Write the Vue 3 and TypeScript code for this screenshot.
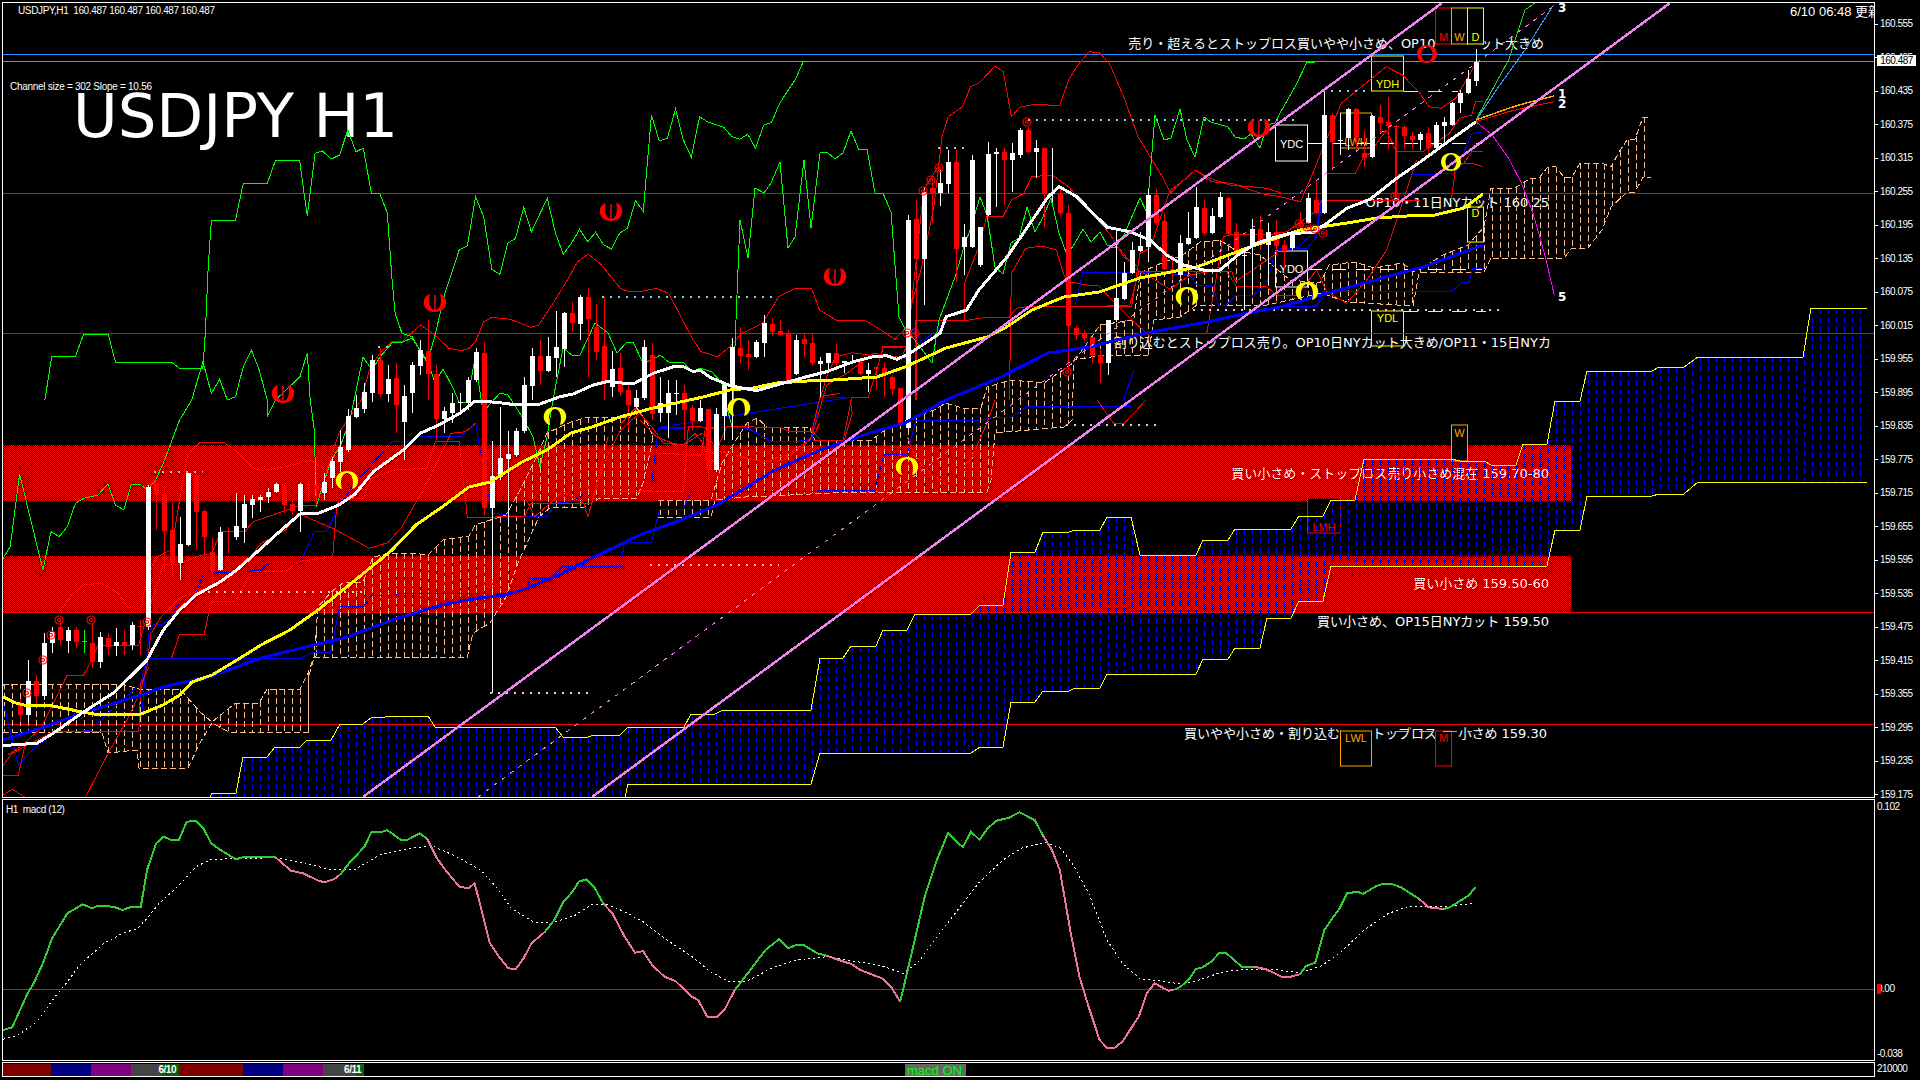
<script setup lang="ts">
type Pt = [number, number]

interface Line {
  color: string
  w: number
  pts: Pt[]
  dash?: string
}

// the reference crops were read at different scales, so points are kept per crop
const conv = (ox: number, oy: number, sx: number, sy: number, p: number[]): Pt[] => {
  const out: Pt[] = []
  for (let i = 0; i < p.length; i += 2) out.push([ox + p[i] / sx, oy + p[i + 1] / sy])
  return out
}
const abs = (p: number[]) => conv(0, 0, 1, 1, p)
const z1 = (p: number[]) => conv(0, 0, 2.45, 3, p)
const z2 = (p: number[]) => conv(1280, 0, 2.45, 3, p)
const z3 = (p: number[]) => conv(640, 0, 2.45, 3, p)
const z4 = (p: number[]) => conv(0, 400, 2.45, 3, p)
const z5 = (p: number[]) => conv(640, 400, 2.45, 3, p)
const z7 = (p: number[]) => conv(0, 780, 1.633, 3, p)
const z8 = (p: number[]) => conv(960, 780, 1.633, 3, p)
const z9 = (p: number[]) => conv(620, 320, 3, 3, p)
const z10 = (p: number[]) => conv(1100, 160, 3, 3, p)
const z12 = (p: number[]) => conv(340, 320, 3, 3, p)

const toPoints = (pts: Pt[]) => pts.map((p) => `${p[0].toFixed(1)},${p[1].toFixed(1)}`).join(' ')

const priceLabels: string[] = []
for (let i = 0; i < 24; i++) priceLabels.push((160.555 - i * 0.06).toFixed(3))

// two notes are split where the M/W/D and LWL boxes sit on top of them
const notes = [
  { x: 1435.5, y: 48, text: '売り・超えるとストップロス買いやや小さめ、OP10' },
  { x: 1544, y: 48, text: 'ット大きめ' },
  { x: 1549, y: 207, text: 'OP10・11日NYカット 160.25' },
  { x: 1551, y: 347, text: '割り込むとストップロス売り。OP10日NYカット大きめ/OP11・15日NYカ' },
  { x: 1549, y: 478, text: '買い小さめ・ストップロス売り小さめ混在 159.70-80' },
  { x: 1549, y: 588, text: '買い小さめ 159.50-60' },
  { x: 1549, y: 626, text: '買い小さめ、OP15日NYカット 159.50' },
  { x: 1340, y: 738, text: '買いやや小さめ・割り込む' },
  { x: 1437, y: 738, text: 'トップロス' },
  { x: 1547, y: 738, text: '小さめ 159.30' }
]

const boxes = [
  { x: 1435.5, y: 8, w: 16, h: 36, color: '#ff0000', text: 'M', ty: 41, fill: true },
  { x: 1451.5, y: 8, w: 16, h: 36, color: '#ffa500', text: 'W', ty: 41, fill: true },
  { x: 1467.5, y: 8, w: 16, h: 36, color: '#ffff00', text: 'D', ty: 41, fill: true },
  { x: 1371.5, y: 56, w: 32, h: 35, color: '#ffff00', text: 'YDH', ty: 88, fill: false },
  { x: 1340.5, y: 113, w: 31, h: 35, color: '#ffa500', text: 'LWH', ty: 146, fill: false },
  { x: 1275.5, y: 125, w: 32, h: 36, color: '#ffffff', text: 'YDC', ty: 148, fill: false },
  { x: 1467.5, y: 207, w: 16, h: 35, color: '#ffff00', text: 'D', ty: 217, fill: false },
  { x: 1275.5, y: 251, w: 32, h: 36, color: '#ffffff', text: 'YDO', ty: 273, fill: false },
  { x: 1371.5, y: 311, w: 32, h: 35, color: '#ffff00', text: 'YDL', ty: 322, fill: false },
  { x: 1451.5, y: 425, w: 16, h: 36, color: '#ffa500', text: 'W', ty: 437, fill: true },
  { x: 1307.5, y: 498, w: 33, h: 35, color: '#ff0000', text: 'LMH', ty: 531, fill: true },
  { x: 1340.5, y: 731, w: 31, h: 35, color: '#ffa500', text: 'LWL', ty: 742, fill: true },
  { x: 1435.5, y: 731, w: 16, h: 35, color: '#ff0000', text: 'M', ty: 742, fill: true }
]

const hLines = [193.5, 333.5, 612.5, 724.5]

// ichimoku clouds are drawn as dashed verticals between two polylines
const interp = (pts: Pt[], x: number) => {
  if (x <= pts[0][0]) return pts[0][1]
  for (let i = 1; i < pts.length; i++) {
    if (x <= pts[i][0]) {
      const a = pts[i - 1]
      const b = pts[i]
      return b[0] === a[0] ? b[1] : a[1] + ((x - a[0]) / (b[0] - a[0])) * (b[1] - a[1])
    }
  }
  return pts[pts.length - 1][1]
}
const hatch = (top: Pt[], bot: Pt[]) => {
  const from = Math.max(top[0][0], bot[0][0])
  const to = Math.min(top[top.length - 1][0], bot[bot.length - 1][0])
  let d = ''
  for (let x = 4; x <= to; x += 8) {
    if (x < from) continue
    const a = interp(top, x)
    const b = interp(bot, x)
    if (Math.abs(a - b) > 2) d += `M${x + 0.5} ${a.toFixed(0)}V${b.toFixed(0)}`
  }
  return d
}

const spanTop = abs([210, 797, 212, 793, 236, 793, 243, 757, 267, 757, 275, 747, 300, 747, 307, 740, 331, 740, 340, 724, 363, 724, 371, 718, 399, 716, 428, 716, 435, 727, 555, 727, 563, 737, 588, 737, 594, 735, 620, 735, 627, 728, 656, 727, 684, 727, 691, 714, 715, 714, 723, 710, 811, 710, 820, 658, 843, 658, 851, 646, 876, 646, 883, 630, 907, 630, 915, 614, 971, 614, 980, 605, 1003, 605, 1011, 552, 1035, 552, 1043, 532, 1069, 532, 1075, 530, 1100, 530, 1107, 517, 1131, 517, 1140, 555, 1196, 555, 1203, 540, 1228, 540, 1235, 529, 1291, 529, 1299, 516, 1323, 516, 1331, 500, 1355, 500, 1364, 459, 1451, 459, 1460, 461, 1484, 461, 1491, 465, 1516, 465, 1523, 444, 1547, 444, 1555, 401, 1580, 401, 1587, 371, 1652, 371, 1659, 367, 1684, 367, 1698, 357, 1803, 357, 1811, 308, 1867, 308])
const spanBot = abs([210, 797, 625, 797, 628, 784, 811, 784, 820, 753, 971, 753, 980, 747, 1003, 747, 1011, 702, 1035, 702, 1043, 691, 1069, 691, 1075, 688, 1100, 688, 1107, 674, 1196, 674, 1203, 659, 1228, 659, 1235, 648, 1260, 648, 1267, 618, 1291, 618, 1299, 601, 1323, 601, 1331, 566, 1547, 566, 1555, 530, 1580, 530, 1587, 496, 1652, 496, 1659, 494, 1684, 494, 1698, 482, 1867, 482])
const blueHatch = hatch(spanTop, spanBot)

const tan1Top = abs([3, 684, 122, 684, 139, 689, 180, 689, 200, 712, 212, 722, 229, 708, 236, 703, 259, 703, 267, 689, 300, 689, 308, 673, 314, 657, 318, 607, 331, 592, 343, 583, 363, 582, 373, 557, 392, 553, 412, 553, 428, 555, 443, 540, 469, 536, 475, 525, 506, 515, 520, 490, 535, 460, 547, 433, 571, 422, 588, 417, 630, 417, 637, 408, 647, 423, 653, 437])
const tan1Bot = abs([3, 732, 102, 733, 108, 753, 137, 750, 139, 768, 188, 768, 200, 743, 212, 723, 229, 732, 308, 732, 308, 680, 314, 657, 467, 658, 473, 633, 490, 623, 506, 597, 518, 563, 539, 517, 551, 507, 584, 507, 600, 498, 637, 498, 643, 483, 650, 453, 653, 437])
const tan2Top = abs([658, 500, 711, 500, 722, 463, 738, 437, 747, 423, 757, 418, 767, 427, 810, 428, 815, 440, 870, 441, 885, 430, 907, 420, 934, 410, 946, 403, 962, 408, 981, 408, 987, 387, 1011, 380, 1044, 383, 1073, 363, 1100, 325, 1134, 320, 1140, 273, 1157, 265, 1183, 255, 1200, 242, 1220, 240, 1235, 250, 1260, 255, 1290, 280, 1320, 283, 1329, 265, 1355, 262, 1374, 268, 1402, 263, 1415, 272, 1443, 255, 1468, 245, 1484, 227, 1491, 188, 1515, 188, 1531, 178, 1539, 178, 1547, 168, 1555, 166, 1564, 177, 1572, 177, 1580, 163, 1602, 163, 1611, 167, 1619, 152, 1627, 140, 1635, 139, 1643, 117, 1651, 117])
const tan2Bot = abs([658, 517, 711, 517, 715, 500, 745, 497, 790, 495, 850, 492, 987, 492, 991, 480, 995, 433, 1064, 427, 1072, 420, 1074, 360, 1103, 355, 1148, 355, 1154, 320, 1180, 317, 1197, 305, 1267, 305, 1290, 300, 1321, 293, 1347, 302, 1413, 306, 1419, 273, 1451, 272, 1484, 272, 1491, 258, 1564, 258, 1572, 248, 1588, 248, 1602, 230, 1611, 207, 1627, 192, 1635, 192, 1643, 177, 1651, 177])
const tanHatch = hatch(tan1Top, tan1Bot) + hatch(tan2Top, tan2Bot)

const cloudTan = '#fbbd8a'

const thinLines: Line[] = [
  // cloud outlines
  { color: cloudTan, w: 1, dash: '6 3', pts: tan1Top },
  { color: cloudTan, w: 1, dash: '6 3', pts: tan1Bot },
  { color: cloudTan, w: 1, dash: '6 3', pts: tan2Top },
  { color: cloudTan, w: 1, dash: '6 3', pts: tan2Bot },
  { color: '#ffff00', w: 1, pts: spanTop },
  { color: '#ffff00', w: 1, pts: spanBot },
  // kijun-like steps, blue
  { color: '#0000ff', w: 1, pts: [...z4([0, 870, 200, 868, 0, 870, 45, 1095, 70, 1060, 105, 1025, 130, 995, 190, 995, 220, 990, 345, 850, 360, 775, 735, 775, 765, 757, 810, 757, 832, 620, 890, 620, 910, 587, 970, 585, 985, 580, 1240, 580, 1290, 565, 1300, 535, 1350, 535, 1380, 498, 1520, 498, 1530, 430]), ...z5([0, 427, 28, 427, 48, 330, 105, 328, 125, 275, 575, 272, 597, 162, 655, 162, 675, 62, 835, 60, 870, 52, 910, 52, 950, 18, 1200, 18]), ...z3([1185, 1200, 1210, 1110])] },
  { color: '#0000ff', w: 1, pts: z4([345, 990, 355, 830, 365, 700, 375, 675, 400, 672, 420, 650, 440, 605, 470, 603, 500, 520, 590, 515, 640, 510, 655, 490, 735, 490, 770, 395, 800, 395, 830, 320, 860, 265, 930, 165, 960, 125, 1000, 125, 1030, 108, 1130, 108, 1165, 70, 1185, 210, 1205, 340, 1285, 350, 1340, 350, 1360, 310, 1400, 305, 1437, 278]) },
  { color: '#0000ff', w: 1, pts: [...z9([95, 490, 115, 325, 380, 322, 410, 340, 455, 365, 575, 362, 600, 232, 690, 232]), ...z5([48, 82, 250, 82, 280, 95, 322, 125, 420, 122])] },
  { color: '#0000ff', w: 1, pts: [...z3([655, 1000, 675, 985, 690, 1030, 730, 985, 760, 960])] },
  { color: '#0000ff', w: 1, pts: [...z3([1065, 920, 1085, 818, 1220, 818]), ...z10([0, 337, 115, 337, 270, 345, 290, 375, 340, 380, 355, 435, 380, 435, 410, 405, 460, 405, 500, 370, 525, 275, 570, 265, 620, 265, 650, 230, 665, 122, 695, 122])] },
  { color: '#0000ff', w: 1, pts: [...z10([590, 450, 650, 435, 670, 395, 960, 395]), ...z2([420, 875, 445, 848, 463, 848, 472, 805, 500, 805])] },
  { color: '#0000ff', w: 1, pts: z2([0, 918, 90, 918, 115, 875, 420, 875]) },
  { color: '#0000ff', w: 1, pts: [...z2([0, 745, 40, 745, 90, 690, 100, 600, 125, 600])] },
  { color: '#0000ff', w: 1, pts: z2([320, 525, 430, 520, 440, 490, 470, 400, 495, 397]) },
  // red steps and bands
  { color: '#ff0000', w: 1, pts: [...z4([145, 640, 175, 585, 205, 555, 250, 550, 290, 580, 310, 620, 345, 628, 360, 530, 385, 470, 420, 450, 440, 300, 460, 160, 490, 128, 550, 128, 580, 155, 620, 205, 640, 212, 700, 200, 760, 180, 800, 210, 830, 100]), ...z1([885, 1200, 905, 1110, 930, 1060, 960, 1025, 985, 1025, 1030, 975, 1060, 1000, 1100, 1045, 1130, 1052, 1150, 1045, 1165, 1025, 1185, 965, 1205, 952, 1250, 958, 1300, 982, 1320, 975, 1360, 900, 1390, 840, 1415, 785, 1440, 763, 1470, 790, 1520, 865, 1540, 875, 1568, 875]), ...z3([40, 865, 70, 880, 100, 950, 130, 1020, 150, 1055, 190, 1070, 220, 1040, 250, 1000, 300, 970, 340, 890, 380, 865, 420, 865, 440, 930, 480, 960, 550, 960, 590, 990, 625, 1018, 650, 985, 690, 800, 720, 620, 740, 410, 755, 350, 790, 320, 810, 260, 830, 250, 870, 198, 890, 215, 910, 350, 930, 322, 970, 312, 1028, 318, 1050, 240, 1070, 200, 1100, 155, 1125, 158, 1150, 190, 1185, 290, 1220, 410, 1250, 470, 1275, 520, 1300, 578, 1360, 510, 1400, 545, 1450, 550, 1520, 580, 1568, 590]), ...z2([50, 605, 80, 520, 150, 310, 200, 260, 260, 200, 300, 225, 340, 275, 365, 320, 395, 325, 430, 295, 480, 190])] },
  { color: '#ff0000', w: 1, pts: [...z4([210, 1190, 265, 1060, 320, 940, 345, 870, 360, 800, 370, 700, 395, 650, 440, 595, 490, 570, 560, 540, 600, 490, 640, 430, 700, 390, 730, 340, 820, 388, 905, 445, 950, 428, 985, 380, 1050, 240, 1105, 100, 1140, 95, 1165, 70])] },
  { color: '#ff0000', w: 1, pts: z4([420, 775, 440, 703, 500, 703, 518, 603, 580, 603, 615, 515, 700, 515, 730, 485, 815, 470, 825, 320, 830, 300, 890, 295, 910, 235, 965, 210, 1045, 205, 1067, 125, 1125, 125, 1145, 352, 1285, 350, 1300, 310, 1450, 310, 1490, 110]) },
  { color: '#ff0000', w: 1, pts: z4([20, 1065, 50, 1040, 100, 985, 165, 825, 205, 825, 225, 780, 240, 735, 340, 735, 350, 690, 365, 630, 400, 492, 440, 492, 480, 470, 520, 460, 540, 395, 600, 395, 620, 365, 680, 340, 730, 318, 780, 316]) },
  { color: '#ff0000', w: 1, pts: z4([5, 1100, 30, 1060, 130, 995, 340, 995, 345, 850, 365, 800]) },
  { color: '#ff0000', w: 1, pts: z4([5, 1125, 45, 1125, 60, 1040]) },
  { color: '#ff0000', w: 1, pts: z7([5, 45, 20, 28, 40, 50]) },
  { color: '#ff0000', w: 1, pts: z4([1290, 300, 1310, 350, 1380, 275, 1430, 310, 1440, 350, 1480, 190, 1520, 90, 1568, 40]) },
  { color: '#ff0000', w: 1, pts: z9([0, 315, 45, 265, 95, 320, 130, 370, 190, 375, 245, 340, 265, 350, 290, 390, 320, 320, 480, 322, 510, 335, 575, 335, 600, 230, 660, 220]) },
  { color: '#ff0000', w: 1, pts: z9([115, 400, 250, 405, 300, 395, 345, 405, 430, 425, 500, 405, 570, 360, 590, 300, 620, 195, 680, 160, 760, 100, 860, 115]) },
  { color: '#ff0000', w: 1, pts: z9([580, 360, 670, 360, 695, 232, 745, 232, 790, 82, 850, 82]) },
  { color: '#ff0000', w: 1, pts: z9([0, 515, 190, 515, 205, 320, 285, 322]) },
  { color: '#ff0000', w: 1, pts: z5([0, 60, 40, 110, 80, 130, 105, 135, 135, 100, 155, 130, 165, 200, 205, 155, 240, 170, 300, 185, 350, 180, 400, 140, 430, 95, 440, 70]) },
  { color: '#ff0000', w: 1, pts: z5([0, 272, 105, 275, 115, 165, 150, 165, 160, 85, 180, 85]) },
  { color: '#ff0000', w: 1, pts: z5([420, 90, 445, 122, 500, 122, 520, 40, 515, 0]) },
  { color: '#ff0000', w: 1, pts: z5([655, 110, 670, 160, 700, 210, 750, 255, 810, 180, 850, 70, 870, 0]) },
  { color: '#ff0000', w: 1, pts: z5([1120, 0, 1160, 70, 1185, 72, 1240, 0]) },
  { color: '#ff0000', w: 1, pts: z3([675, 1200, 675, 960, 805, 960, 850, 952, 905, 952, 922, 925, 950, 920, 1060, 920, 1145, 918, 1200, 915, 1222, 815, 1450, 815, 1459, 845, 1560, 760]) },
  { color: '#ff0000', w: 1, pts: z3([640, 1080, 655, 1030, 675, 800, 695, 570, 730, 500]) },
  { color: '#ff0000', w: 1, pts: z3([795, 960, 795, 850, 830, 740, 850, 648, 890, 648, 910, 600, 940, 580, 960, 530, 1010, 525, 1050, 560, 1100, 630, 1150, 700, 1185, 770, 1220, 800]) },
  { color: '#ff0000', w: 1, pts: z3([905, 1200, 910, 820, 945, 745, 985, 738, 1020, 750, 1040, 830, 1050, 845, 1095, 855, 1125, 858, 1160, 905, 1210, 965, 1250, 1010]) },
  { color: '#ff0000', w: 1, pts: z3([440, 1200, 460, 1120, 480, 1070, 520, 1058, 590, 1070, 595, 1040, 655, 1040]) },
  { color: '#ff0000', w: 1, pts: z10([60, 268, 110, 330, 150, 350, 210, 388, 270, 345, 325, 335, 380, 335, 410, 380, 500, 380, 530, 405, 590, 405, 650, 330, 680, 395, 740, 430, 800, 360, 860, 270, 900, 150, 950, 0]) },
  { color: '#ff0000', w: 1, pts: z10([320, 520, 370, 230, 400, 222, 520, 222, 560, 215, 640, 160, 665, 122, 960, 122]) },
  { color: '#ff0000', w: 1, pts: z10([0, 438, 95, 438, 120, 280, 150, 265, 210, 90, 240, 70, 285, 30, 330, 55, 390, 75, 450, 80, 500, 85, 545, 100]) },
  { color: '#ff0000', w: 1, pts: z2([100, 520, 185, 520, 205, 470, 220, 460, 260, 390, 285, 455, 350, 455, 415, 400, 440, 355, 470, 345, 480, 303, 497, 303]) },
  { color: '#ff0000', w: 1, pts: z2([420, 600, 430, 500, 450, 490, 470, 455, 497, 455]) },
  { color: '#ff0000', w: 1, pts: z2([440, 490, 470, 490, 497, 500]) },
  { color: '#ff0000', w: 1, pts: z2([283, 380, 283, 590]) },
  // chikou style lines
  { color: '#00ff00', w: 1, pts: [...z1([110, 1200, 127, 1068, 185, 1068, 205, 1002, 265, 1002, 283, 1087, 420, 1087, 440, 1105, 497, 1105, 503, 1000, 510, 800, 518, 660, 577, 660, 596, 550, 655, 550, 675, 481, 734, 481, 745, 580, 753, 647, 772, 460, 790, 453, 812, 477, 832, 465, 852, 390, 872, 455, 890, 445, 910, 580, 930, 580, 949, 638, 960, 830, 968, 940, 985, 1000, 1010, 1010, 1047, 1090, 1060, 1030, 1067, 1000, 1090, 880, 1125, 750, 1145, 738, 1165, 590, 1185, 650, 1205, 808, 1225, 823, 1244, 730, 1263, 715, 1283, 622, 1302, 695, 1341, 595, 1361, 700, 1380, 763, 1400, 730, 1420, 688, 1440, 725, 1459, 697, 1479, 735, 1498, 747, 1518, 700, 1537, 685, 1557, 602, 1568, 620]), ...z3([8, 635, 28, 345, 47, 423, 67, 415, 87, 328, 106, 420, 126, 472, 146, 350, 165, 365, 205, 382, 225, 410, 244, 418, 264, 403, 283, 445, 303, 375, 322, 368, 342, 310, 380, 240, 400, 185, 420, 185])] },
  { color: '#00ff00', w: 1, pts: [...z4([0, 490, 25, 440, 48, 222, 105, 510, 125, 395, 145, 410, 165, 380, 185, 310, 205, 295, 240, 285, 264, 252, 283, 315, 303, 330, 322, 252, 342, 252, 361, 270, 381, 240, 400, 190, 440, 60, 470, 0]), ...z1([497, 1085, 518, 1180, 538, 1138, 557, 1200, 577, 1190, 596, 1100, 616, 1050, 635, 1110, 655, 1200]), ...z4([655, 50, 675, 0]), ...z1([735, 1130, 753, 1058, 760, 1200]), ...z4([770, 90, 775, 320, 792, 250, 812, 180, 832, 140]), ...abs([340, 447, 350, 420, 363, 357, 372, 370, 380, 357, 393, 342, 403, 342, 412, 338, 420, 350, 428, 362, 435, 383, 443, 369, 453, 388, 459, 402, 467, 403, 475, 358, 483, 412, 500, 393, 508, 395, 523, 418, 533, 437, 540, 467, 547, 437, 553, 400, 563, 348, 573, 356, 580, 355, 595, 323, 608, 333, 617, 353, 627, 342, 633, 342, 643, 363, 652, 360, 660, 355, 670, 363, 683, 362, 692, 372, 700, 368, 712, 372, 722, 383, 725, 400, 732, 427, 736, 320, 740, 220, 748, 258, 755, 188, 764, 193, 771, 183, 780, 162, 788, 248, 795, 237, 804, 160, 811, 228, 820, 153, 827, 152, 835, 159, 843, 153, 851, 131, 859, 150, 867, 149, 875, 193, 883, 193, 891, 212, 899, 317, 907, 333, 915, 340, 932, 363, 939, 320, 955, 277, 964, 247, 971, 227, 980, 197, 987, 215, 995, 267, 1003, 274, 1011, 243, 1019, 238, 1027, 207, 1035, 232, 1043, 217, 1051, 198, 1059, 233, 1067, 255, 1075, 243, 1083, 229, 1091, 242, 1100, 232, 1107, 245, 1115, 248, 1124, 235, 1140, 198, 1147, 213, 1155, 115, 1164, 140, 1171, 138, 1180, 109, 1187, 140, 1195, 157, 1204, 117, 1211, 122, 1228, 127, 1235, 137, 1244, 139, 1251, 134, 1260, 148, 1267, 125, 1275, 123, 1280, 113, 1296, 85, 1307, 62, 1315, 62])] },
  // forecast curves at the right edge
  { color: '#ff00ff', w: 1, pts: z2([480, 365, 520, 405, 560, 475, 590, 545, 620, 640, 650, 770, 672, 885]) },
  { color: '#32cd32', w: 1, pts: z2([480, 360, 520, 270, 560, 180, 600, 30, 625, 8]) },
  { color: '#3399ff', w: 1, pts: z2([480, 362, 530, 270, 600, 150, 670, 15]) },
  { color: '#ff0000', w: 1, pts: z2([480, 365, 560, 335, 620, 318, 672, 305]) },
  { color: '#ffa500', w: 1.5, pts: z2([480, 360, 560, 325, 600, 310, 672, 288]) }
]

const dots = [
  { x1: 378, x2: 394, y: 347, color: '#87cefa' },
  { x1: 602, x2: 777, y: 297, color: '#87cefa' },
  { x1: 938, x2: 970, y: 148, color: '#87cefa' },
  { x1: 1028, x2: 1300, y: 120, color: '#87cefa' },
  { x1: 1323, x2: 1371, y: 91, color: '#87cefa' },
  { x1: 154, x2: 203, y: 472, color: '#87cefa' },
  { x1: 3, x2: 12, y: 685, color: '#87cefa' },
  { x1: 208, x2: 367, y: 592, color: '#ffdab9' },
  { x1: 490, x2: 588, y: 693, color: '#ffc0cb' },
  { x1: 650, x2: 779, y: 565, color: '#ffc0cb' },
  { x1: 1066, x2: 1162, y: 425, color: '#ffc0cb' },
  { x1: 1193, x2: 1504, y: 310, color: '#ffc0cb' }
]

const levelDashes = [
  { x1: 1308, x2: 1482, y: 143, color: '#ffffff' },
  { x1: 1308, x2: 1482, y: 269, color: '#ffffff' },
  { x1: 1404, x2: 1458, y: 91, color: '#ffff00' },
  { x1: 1404, x2: 1486, y: 311, color: '#ffff00' },
  { x1: 1395, x2: 1472, y: 731, color: '#ffa500' }
]

// type: 0 red, 1 white, 2 green. [type, bodyTop, bodyBottom, wickTop, wickBottom], first one is bar 2
const rawBars: number[][] = [
  [0, 704, 715, 700, 722], [1, 681, 715, 660, 722], [0, 681, 696, 675, 705], [1, 643, 696, 633, 700],
  [1, 632, 643, 627, 653], [0, 627, 640, 620, 646], [1, 630, 641, 627, 653], [0, 630, 642, 627, 648],
  [2, 641, 642, 630, 653], [0, 643, 662, 623, 668], [1, 637, 662, 632, 668], [0, 638, 647, 633, 655],
  [1, 642, 646, 628, 656], [0, 642, 646, 630, 655], [1, 625, 645, 622, 650], [0, 626, 627, 620, 655],
  [1, 487, 627, 485, 630], [0, 483, 495, 480, 530], [0, 494, 531, 487, 573], [0, 530, 563, 502, 577],
  [1, 544, 563, 517, 580], [1, 473, 545, 473, 546], [0, 475, 512, 475, 550], [0, 511, 537, 510, 560],
  [0, 552, 571, 538, 587], [1, 532, 570, 527, 571], [0, 531, 532, 527, 553], [1, 526, 537, 493, 540],
  [1, 504, 528, 495, 543], [1, 499, 505, 495, 518], [1, 497, 500, 495, 512], [1, 492, 497, 488, 503],
  [1, 484, 492, 483, 493], [0, 485, 505, 482, 513], [0, 504, 511, 498, 515], [1, 484, 511, 483, 532],
  [0, 484, 485, 480, 500], [0, 485, 490, 478, 505], [1, 482, 493, 473, 500], [1, 461, 478, 457, 488],
  [1, 447, 462, 430, 472], [1, 416, 450, 409, 452], [1, 408, 417, 395, 418], [1, 392, 409, 383, 413],
  [1, 360, 393, 355, 402], [0, 360, 394, 348, 397], [1, 379, 394, 365, 402], [0, 378, 405, 363, 433],
  [1, 396, 422, 385, 460], [1, 365, 393, 362, 413], [1, 350, 366, 340, 375], [0, 351, 374, 320, 400],
  [0, 374, 419, 365, 440], [1, 411, 419, 407, 433], [1, 403, 413, 393, 423], [1, 402, 403, 393, 412],
  [1, 380, 403, 377, 410], [1, 352, 380, 348, 382], [0, 353, 508, 342, 515], [1, 476, 508, 441, 693],
  [1, 458, 477, 407, 480], [1, 454, 459, 431, 527], [1, 431, 455, 428, 457], [1, 385, 431, 377, 433],
  [1, 356, 386, 348, 400], [0, 356, 371, 340, 385], [1, 356, 371, 337, 372], [1, 347, 358, 311, 377],
  [1, 313, 349, 312, 367], [0, 313, 323, 302, 331], [1, 297, 324, 295, 340], [0, 297, 319, 288, 377],
  [0, 327, 352, 304, 360], [0, 346, 382, 297, 400], [1, 369, 387, 351, 397], [0, 368, 392, 353, 396],
  [0, 390, 405, 385, 430], [1, 398, 407, 390, 408], [1, 347, 398, 340, 400], [0, 355, 414, 343, 420],
  [1, 403, 413, 377, 422], [1, 393, 413, 380, 438], [1, 393, 394, 380, 415], [0, 393, 410, 385, 440],
  [0, 408, 421, 405, 430], [1, 408, 421, 400, 422], [0, 409, 470, 409, 480], [1, 414, 470, 408, 472],
  [1, 385, 416, 385, 440], [1, 347, 387, 338, 440], [0, 348, 356, 327, 363], [0, 354, 357, 340, 370],
  [1, 342, 357, 340, 358], [1, 323, 343, 315, 357], [0, 324, 332, 318, 336], [0, 331, 335, 320, 336],
  [0, 333, 381, 330, 382], [1, 340, 374, 335, 375], [0, 339, 344, 333, 357], [0, 343, 363, 333, 365],
  [1, 361, 364, 357, 397], [1, 353, 363, 353, 373], [0, 353, 363, 344, 365], [1, 361, 363, 361, 373],
  [1, 361, 363, 355, 364], [0, 361, 374, 360, 375], [1, 370, 374, 363, 392], [0, 367, 369, 367, 390],
  [0, 368, 373, 362, 397], [0, 377, 389, 375, 395], [0, 388, 423, 388, 425], [1, 220, 428, 215, 430],
  [0, 219, 259, 200, 400], [1, 192, 259, 187, 305], [0, 188, 193, 182, 223], [1, 183, 193, 170, 206],
  [1, 162, 184, 150, 193], [0, 162, 249, 150, 282], [1, 237, 247, 224, 275], [1, 160, 247, 155, 248],
  [1, 227, 265, 227, 267], [1, 154, 215, 142, 216], [1, 152, 154, 148, 207], [0, 152, 160, 148, 205],
  [1, 153, 160, 143, 192], [1, 130, 155, 128, 158], [0, 130, 152, 127, 153], [1, 148, 152, 140, 178],
  [0, 148, 193, 148, 227], [1, 193, 194, 148, 202], [0, 193, 213, 187, 215], [0, 213, 326, 205, 372],
  [0, 328, 335, 326, 340], [0, 333, 338, 330, 342], [0, 337, 355, 337, 363], [0, 355, 363, 350, 383],
  [1, 320, 363, 320, 375], [1, 298, 320, 228, 322], [1, 273, 299, 262, 300], [1, 250, 273, 242, 274],
  [1, 246, 251, 232, 252], [1, 195, 247, 189, 262], [0, 195, 223, 189, 225], [0, 221, 269, 213, 270],
  [0, 269, 271, 255, 280], [1, 243, 275, 235, 276], [1, 238, 244, 212, 245], [1, 207, 238, 187, 239],
  [0, 208, 233, 200, 235], [1, 216, 233, 208, 234], [1, 197, 217, 192, 218], [0, 198, 234, 197, 235],
  [0, 232, 256, 223, 258], [1, 255, 256, 250, 310], [1, 229, 245, 219, 290], [0, 229, 242, 216, 250],
  [1, 232, 245, 223, 285], [0, 232, 246, 220, 255], [0, 245, 251, 240, 270], [1, 234, 248, 233, 250],
  [0, 222, 224, 212, 235], [1, 198, 223, 193, 224], [0, 200, 213, 180, 214], [1, 115, 213, 92, 214],
  [0, 115, 142, 113, 170], [1, 140, 141, 113, 155], [1, 109, 138, 108, 150], [0, 109, 138, 108, 150],
  [0, 153, 158, 130, 167], [1, 116, 157, 115, 158], [0, 117, 123, 105, 133], [0, 122, 126, 97, 150],
  [0, 126, 127, 125, 195], [0, 127, 136, 125, 150], [0, 136, 140, 132, 150], [1, 134, 140, 132, 150],
  [0, 133, 148, 127, 155], [1, 125, 148, 122, 150], [1, 122, 126, 117, 145], [1, 103, 125, 102, 126],
  [1, 93, 103, 90, 113], [1, 79, 93, 70, 94], [1, 62, 81, 49, 86]
]
const barColors = ['#ff0000', '#ffffff', '#00ff00']
const bars = rawBars.map((b, i) => ({
  x: 4 + 8 * (i + 2),
  color: barColors[b[0]],
  top: b[1],
  h: Math.max(b[2] - b[1], 1),
  wt: b[3],
  wh: b[4] - b[3]
}))

const thickLines: Line[] = [
  { color: '#0000ff', w: 3, pts: abs([3, 740, 41, 728, 82, 713, 118, 702, 141, 695, 163, 687, 212, 676, 261, 658, 302, 648, 347, 637, 392, 620, 441, 605, 478, 598, 506, 595, 527, 588, 559, 575, 592, 558, 640, 535, 681, 520, 717, 505, 775, 470, 820, 450, 873, 432, 905, 423, 946, 400, 999, 378, 1048, 353, 1089, 347, 1146, 333, 1207, 322, 1252, 312, 1280, 307, 1321, 295, 1382, 278, 1423, 267, 1483, 245]) },
  { color: '#ffff00', w: 3, pts: abs([3, 697, 16, 703, 24, 705, 53, 706, 82, 712, 94, 714, 122, 715, 141, 714, 163, 705, 180, 695, 192, 682, 212, 675, 237, 660, 261, 645, 290, 630, 318, 610, 343, 590, 359, 577, 392, 550, 416, 525, 445, 505, 469, 487, 490, 482, 522, 462, 547, 450, 571, 433, 592, 427, 620, 417, 653, 408, 703, 397, 730, 390, 753, 388, 777, 383, 807, 381, 833, 380, 877, 377, 905, 367, 946, 348, 987, 337, 1005, 328, 1032, 310, 1064, 297, 1099, 292, 1140, 278, 1197, 267, 1247, 248, 1280, 237, 1300, 230, 1320, 227, 1347, 223, 1377, 218, 1407, 216, 1435, 215, 1464, 208, 1483, 194]) },
  { color: '#ffffff', w: 3, pts: [...z4([0, 1037, 90, 1030, 130, 1000, 200, 940, 280, 877, 340, 805, 360, 780, 400, 690, 440, 630, 480, 585, 540, 545, 580, 510, 640, 445, 680, 400, 735, 342, 780, 340, 830, 315, 870, 282]), ...z12([100, 455, 190, 390, 240, 340, 290, 318, 360, 280, 405, 243, 470, 247, 530, 255, 600, 252, 660, 230, 700, 222, 760, 195, 800, 185, 880, 192, 910, 175]), ...z9([100, 160, 160, 140, 190, 140, 220, 155, 240, 150, 270, 172, 330, 197, 410, 212, 470, 195, 560, 170, 620, 155, 700, 125, 760, 110, 800, 107, 830, 118, 860, 105, 900, 80, 960, 40]), ...z3([750, 950, 800, 930, 830, 870, 900, 770, 1000, 590, 1027, 560, 1070, 590, 1110, 640, 1145, 682]), ...z10([90, 215, 150, 240, 200, 285, 250, 315, 310, 330, 360, 330, 420, 280, 470, 250, 530, 230, 570, 220, 640, 218, 680, 190, 740, 145, 810, 118, 890, 55]), ...z2([350, 480, 400, 435, 480, 365])] }
]

const redRings = abs([27, 693, 43, 660, 51, 635, 59, 620, 91, 620, 147, 622, 155, 484, 484, 457, 491, 584, 907, 333, 915, 333, 923, 191, 931, 180, 939, 168, 1027, 122, 1067, 372, 1299, 224, 1307, 227, 1315, 229, 1323, 233, 1395, 196])
const yellowArches = abs([347, 480, 555, 416, 739, 407, 907, 466, 1187, 296, 1307, 291])
const redArches = abs([283, 394, 435, 303, 611, 212, 835, 277, 1259, 128])

const archPath = 'M-5 9C-14 7-14-9 0-9C14-9 14 7 5 9C7 3 6-7 0-7C-6-7-7 3-5 9Z'
const haloPath = 'M-10 0C-10-6-5-9 0-9C5-9 10-6 10 0C10 6 5 9 0 9C-5 9-10 6-10 0ZM-5.5 0C-5.5 4-3 7.5 0 7.5C3 7.5 5.5 4 5.5 0C5.5-4 3-7.5 0-7.5C-3-7.5-5.5-4-5.5 0Z'

const legs = [
  { x: 1558, y: 12, text: '3' },
  { x: 1558, y: 98, text: '1' },
  { x: 1558, y: 108, text: '2' },
  { x: 1558, y: 301, text: '5' }
]

// macd pane, the main line changes colour with its direction against the signal
const macdGreen = '#32cd32'
const macdPink = '#f0749a'
const macdRuns: Line[] = [
  { color: macdGreen, w: 2, pts: z7([5, 750, 20, 742, 45, 640, 55, 610, 70, 550, 85, 475, 110, 400, 135, 373, 150, 385, 160, 377, 185, 380, 200, 390, 215, 380, 230, 380, 240, 270, 255, 190, 267, 170, 280, 180, 292, 180, 305, 125, 320, 122, 332, 145, 345, 190, 360, 210, 385, 238, 400, 230, 450, 232]) },
  { color: macdPink, w: 2, pts: z7([450, 232, 475, 272, 495, 280, 520, 302, 530, 307, 545, 298, 555, 285]) },
  { color: macdGreen, w: 2, pts: z7([555, 285, 570, 250, 595, 200, 607, 155, 625, 155, 632, 150, 655, 180, 665, 180, 685, 160, 697, 175]) },
  { color: macdPink, w: 2, pts: z7([697, 175, 712, 230, 725, 265, 750, 320, 765, 325, 775, 310, 785, 380, 800, 490, 815, 530, 830, 565, 842, 568, 855, 535, 868, 490, 890, 455]) },
  { color: macdGreen, w: 2, pts: z7([890, 455, 905, 420, 920, 365, 935, 335, 945, 305, 958, 298, 970, 320, 985, 370]) },
  { color: macdPink, w: 2, pts: z7([985, 370, 1000, 400, 1020, 470, 1037, 518, 1050, 513, 1065, 555, 1085, 590, 1103, 603, 1130, 650, 1140, 660, 1155, 710, 1170, 712, 1183, 690, 1200, 630]) },
  { color: macdGreen, w: 2, pts: z7([1200, 630, 1225, 570, 1250, 510, 1272, 478, 1287, 505, 1300, 495, 1312, 495, 1335, 520, 1350, 527]) },
  { color: macdPink, w: 2, pts: z7([1350, 527, 1370, 540, 1390, 552, 1405, 570, 1440, 595, 1455, 620, 1470, 665]) },
  { color: macdGreen, w: 2, pts: [...z7([1470, 665, 1490, 510, 1510, 350, 1530, 240, 1548, 160, 1568, 195]), ...z8([5, 200, 18, 155, 32, 180, 45, 145, 60, 122, 80, 113, 97, 97, 122, 120, 135, 165])] },
  { color: macdPink, w: 2, pts: z8([135, 165, 150, 210, 163, 270, 180, 450, 195, 590, 210, 680, 228, 780, 240, 803, 253, 803, 265, 785, 292, 710, 305, 640, 318, 610, 340, 632, 350, 630]) },
  { color: macdGreen, w: 2, pts: z8([350, 630, 360, 620, 373, 600, 385, 567, 395, 563, 410, 545, 424, 518, 435, 520, 460, 560, 480, 560]) },
  { color: macdPink, w: 2, pts: z8([480, 560, 500, 568, 525, 590, 540, 590, 555, 583]) },
  { color: macdGreen, w: 2, pts: z8([555, 583, 565, 558, 580, 548, 595, 450, 610, 410, 620, 385, 632, 340, 650, 335, 658, 342, 680, 318, 690, 312, 705, 312, 720, 322, 750, 357]) },
  { color: macdPink, w: 2, pts: z8([750, 357, 765, 382, 790, 387]) },
  { color: macdGreen, w: 2, pts: z8([790, 387, 800, 382, 830, 347, 842, 322]) }
]
const macdSignal = toPoints([
  ...z7([5, 778, 30, 765, 60, 725, 90, 650, 110, 605, 130, 555, 170, 490, 200, 460, 225, 445, 240, 415, 260, 370, 290, 320, 320, 260, 345, 238, 450, 233, 500, 250, 540, 270, 580, 268, 620, 225, 660, 208, 705, 197, 740, 225, 785, 270, 810, 320, 835, 385, 870, 425, 900, 430, 940, 405, 965, 375, 990, 372, 1020, 395, 1050, 425, 1085, 475, 1130, 530, 1160, 575, 1190, 605, 1220, 603, 1260, 565, 1300, 540, 1350, 530, 1400, 545, 1440, 558, 1475, 580, 1500, 545, 1530, 470, 1568, 380]),
  ...z8([30, 310, 70, 240, 100, 205, 140, 187, 165, 205, 185, 255, 210, 340, 240, 480, 265, 550, 295, 598, 330, 603, 360, 612, 385, 603, 425, 578, 465, 567, 510, 568, 555, 578, 590, 558, 620, 520, 660, 450, 700, 400, 735, 378, 770, 380, 805, 378, 838, 370])
])

const sessions = [
  { w: 48, cls: 'red' },
  { w: 40, cls: 'blue' },
  { w: 40, cls: 'purple' },
  { w: 31, cls: 'grey' },
  { w: 17, cls: 'green', text: '6/10' },
  { w: 64, cls: 'red' },
  { w: 40, cls: 'blue' },
  { w: 40, cls: 'purple' },
  { w: 33, cls: 'grey' },
  { w: 8, cls: 'green', text: '6/11' }
]
</script>

<template>
  <div class="terminal">
    <div class="plot">
      <svg class="chart" width="1871" height="794" viewBox="3 3 1871 794">
        <defs>
          <pattern id="dither" width="2" height="2" patternUnits="userSpaceOnUse">
            <rect x="0" y="0" width="1" height="1" fill="#ff0000" />
            <rect x="1" y="1" width="1" height="1" fill="#ff0000" />
          </pattern>
        </defs>

        <rect x="3" y="445" width="1568" height="56" fill="url(#dither)" />
        <rect x="3" y="556" width="1568" height="56" fill="url(#dither)" />

        <text class="legend" x="18" y="14">USDJPY,H1&#160;&#160;160.487 160.487 160.487 160.487</text>
        <text class="legend legend-wide" x="10" y="90">Channel size = 302 Slope = 10.56</text>
        <text class="symbol" x="73" y="137">USDJPY H1</text>
        <text class="clock" x="1790" y="16">6/10 06:48 更新</text>
        <text v-for="n in notes" :key="n.text" class="note" :x="n.x" :y="n.y">{{ n.text }}</text>

        <g v-for="b in boxes" :key="b.text + b.y">
          <rect :x="b.x" :y="b.y" :width="b.w" :height="b.h" :stroke="b.color" :fill="b.fill ? '#000000' : 'none'" />
          <text class="box-label" :x="b.x + b.w / 2" :y="b.ty" :fill="b.color">{{ b.text }}</text>
        </g>

        <line x1="3" x2="1874" y1="54.5" y2="54.5" stroke="#1e90ff" />
        <line x1="3" x2="1874" y1="61.5" y2="61.5" stroke="#778899" />
        <line v-for="y in hLines" :key="y" x1="3" x2="1874" :y1="y" :y2="y" stroke="#ff0000" />

        <g class="aliased">
          <path :d="blueHatch" stroke="#0000ff" stroke-dasharray="6 3" fill="none" />
          <path :d="tanHatch" :stroke="cloudTan" stroke-dasharray="6 3" fill="none" />
          <polyline
            v-for="(l, i) in thinLines"
            :key="i"
            :points="toPoints(l.pts)"
            :stroke="l.color"
            :stroke-width="l.w"
            :stroke-dasharray="l.dash"
            fill="none"
          />
          <line v-for="d in dots" :key="d.y + d.color" :x1="d.x1" :x2="d.x2" :y1="d.y" :y2="d.y" :stroke="d.color" stroke-dasharray="2 6" stroke-width="2" />
          <line v-for="d in levelDashes" :key="d.y" :x1="d.x1" :x2="d.x2" :y1="d.y" :y2="d.y" :stroke="d.color" stroke-dasharray="14 10" />

          <g v-for="b in bars" :key="b.x">
            <rect :x="b.x" :y="b.wt" width="1" :height="b.wh" :fill="b.color" />
            <rect :x="b.x - 2" :y="b.top" width="5" :height="b.h" :fill="b.color" />
          </g>

          <polyline
            v-for="(l, i) in thickLines"
            :key="i"
            :points="toPoints(l.pts)"
            :stroke="l.color"
            :stroke-width="l.w"
            stroke-linejoin="round"
            fill="none"
          />

          <line class="channel" x1="363" y1="797" x2="1442" y2="3" />
          <line class="channel" x1="592" y1="797" x2="1670" y2="3" />
          <line class="channel-mid" x1="478" y1="797" x2="1555" y2="5" />
        </g>

        <g v-for="(p, i) in redRings" :key="i" class="ring">
          <circle :cx="p[0]" :cy="p[1]" r="4" />
          <circle :cx="p[0]" :cy="p[1]" r="1.5" />
        </g>
        <g v-for="(p, i) in yellowArches" :key="i" :transform="`translate(${p[0]} ${p[1]})`" fill="#ffff00">
          <path :d="archPath" />
        </g>
        <g v-for="(p, i) in redArches" :key="i" :transform="`translate(${p[0]} ${p[1]}) scale(1 -1)`" fill="#ff0000">
          <path :d="archPath" />
          <rect x="-0.75" y="-8" width="1.5" height="16" />
        </g>
        <path class="halo" :d="haloPath" transform="translate(1451 162)" fill="#ffff00" />
        <path class="halo" :d="haloPath" transform="translate(1427 54)" fill="#ff0000" />

        <text v-for="l in legs" :key="l.text" class="leg" :x="l.x" :y="l.y">{{ l.text }}</text>
      </svg>
    </div>
    <div class="axis price-axis">
      <div v-for="p in priceLabels" :key="p" class="tick">{{ p }}</div>
      <div class="last-price">160.487</div>
    </div>

    <div class="plot">
      <svg class="chart" width="1871" height="260" viewBox="3 800 1871 260">
        <text class="legend" x="6" y="813">H1&#160;&#160;macd (12)</text>
        <line x1="3" x2="1874" y1="989.5" y2="989.5" stroke="#ff0000" />
        <g class="aliased">
          <polyline :points="macdSignal" stroke="#ffffff" stroke-dasharray="2 3" fill="none" />
          <polyline
            v-for="(l, i) in macdRuns"
            :key="i"
            :points="toPoints(l.pts)"
            :stroke="l.color"
            :stroke-width="l.w"
            fill="none"
          />
        </g>
      </svg>
    </div>
    <div class="axis macd-axis">
      <div class="tick">0.102</div>
      <div class="tick zero">0.00</div>
      <div class="tick low">-0.038</div>
    </div>

    <div class="plot session-bar">
      <div
        v-for="(s, i) in sessions"
        :key="i"
        class="session"
        :class="s.cls"
        :style="{ width: s.w + 'px' }"
      >
        <span v-if="s.text" class="session-date">{{ s.text }}</span>
      </div>
      <div class="macd-flag">macd ON</div>
    </div>
    <div class="axis volume-axis">
      <div class="tick">210000</div>
    </div>
  </div>
</template>

<style scoped>
.terminal {
  display: grid;
  grid-template-columns: 1873px 45px;
  grid-template-rows: 796px 262px 15px;
  row-gap: 1px;
  width: 1918px;
  height: 1078px;
  padding: 2px 0 0 2px;
  background: #000;
  color: #fff;
  font-family: "Liberation Sans", sans-serif;
  overflow: hidden;
}

.plot {
  border: 1px solid #fff;
  overflow: hidden;
}

.chart {
  display: block;
  background: #000;
}

.aliased {
  shape-rendering: crispEdges;
}

.legend {
  fill: #fff;
  font-family: "Liberation Sans", sans-serif;
  font-size: 10px;
  letter-spacing: -0.37px;
}

.legend-wide {
  letter-spacing: -0.28px;
}

.symbol {
  fill: #fff;
  font-family: "DejaVu Sans", sans-serif;
  font-size: 61px;
}

.clock {
  fill: #fff;
  font-family: "Liberation Sans", "Noto Sans CJK JP", sans-serif;
  font-size: 13px;
}

.note {
  fill: #fff;
  font-family: "DejaVu Sans", "Noto Sans CJK JP", sans-serif;
  font-size: 13px;
  text-anchor: end;
}

.box-label {
  font-family: "Liberation Sans", sans-serif;
  font-size: 11px;
  text-anchor: middle;
}

.leg {
  fill: #fff;
  font-family: "DejaVu Sans", sans-serif;
  font-size: 12px;
  font-weight: 700;
}

.channel {
  stroke: #ee82ee;
  stroke-width: 2.5;
}

.channel-mid {
  stroke: #ee82ee;
  stroke-dasharray: 4 6;
}

.ring circle {
  fill: none;
  stroke: #ff0000;
  stroke-width: 1.2;
}

.halo {
  fill-rule: evenodd;
}

.axis {
  position: relative;
  font-size: 10px;
  letter-spacing: -0.5px;
}

.price-axis {
  display: flex;
  flex-direction: column;
  justify-content: space-between;
  height: 783px;
  margin-top: 16px;
}

.macd-axis {
  display: flex;
  flex-direction: column;
  padding-top: 2px;
}

.macd-axis .zero {
  margin-top: 170px;
}

.macd-axis .low {
  margin-top: 53px;
}

.volume-axis {
  padding-top: 1px;
}

.tick {
  display: flex;
  align-items: center;
  height: 12px;
  line-height: 12px;
  padding-left: 2px;
}

.price-axis .tick {
  padding-left: 5px;
}

.price-axis .tick::before {
  content: "";
  width: 3px;
  height: 1px;
  margin-left: -5px;
  margin-right: 2px;
  background: #fff;
}

.zero {
  position: relative;
}

.zero::before {
  content: "";
  position: absolute;
  left: 2px;
  width: 4px;
  height: 10px;
  background: #ff0000;
}

.last-price {
  position: absolute;
  top: 37px;
  left: 2px;
  width: 39px;
  height: 11px;
  line-height: 11px;
  text-align: center;
  background: #fff;
  color: #000;
}

.session-bar {
  display: flex;
  padding-top: 1px;
}

.session {
  position: relative;
  height: 12px;
}

.session.red {
  background-color: #800000;
}

.session.blue {
  background-color: #000080;
}

.session.purple {
  background-color: #800080;
}

.session.grey {
  background-color: #444;
}

.session.green {
  background-color: #0a5c0a;
}

.session-date {
  position: absolute;
  right: 3px;
  top: 0;
  color: #fff;
  font-size: 10px;
  font-weight: 700;
  line-height: 12px;
  letter-spacing: -0.5px;
}

.macd-flag {
  width: 61px;
  height: 12px;
  margin-left: 541px;
  background: #666;
  color: #00ff00;
  font-size: 13px;
  line-height: 14px;
  padding-left: 2px;
  box-sizing: border-box;
  overflow: hidden;
  white-space: nowrap;
}
</style>

<style>
html,
body {
  background: #000;
}
</style>
